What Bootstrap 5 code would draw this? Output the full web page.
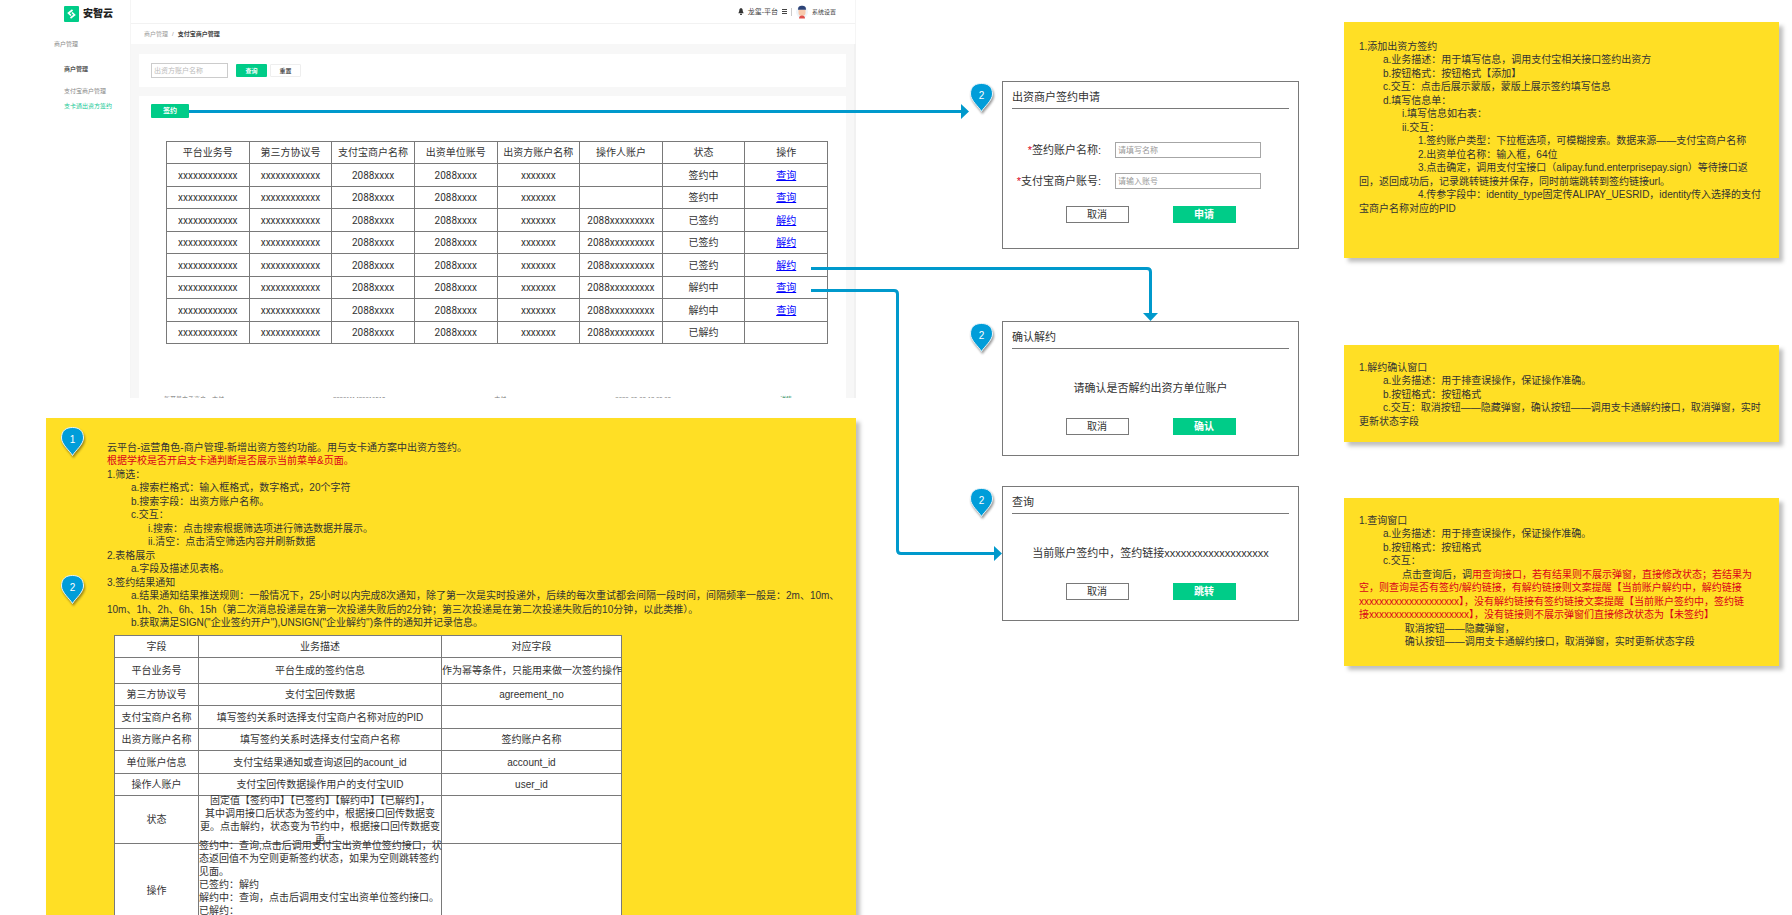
<!DOCTYPE html>
<html lang="zh-CN">
<head>
<meta charset="utf-8">
<meta name="viewport" content="width=device-width, initial-scale=1">
<title>安智云 - 支卡通出资方签约</title>
<link href="https://cdn.jsdelivr.net/npm/bootstrap@5.3.0/dist/css/bootstrap.min.css" rel="stylesheet">
<style>
  :root { --green: #00cc88; --ink: #333333; --line: #797979; --flow: #0099cc; --pin: #009dd9; --red: #d9001b; }
  body { font-family: "Liberation Sans", "Noto Sans CJK SC", sans-serif; font-size: 10px; line-height: 13px; color: var(--ink); background: #fff; }
  .board { display: grid; height: 100vh; overflow: hidden; align-items: start;
    grid-template-columns: minmax(0,46fr) minmax(0,810fr) minmax(0,146fr) minmax(0,297fr) minmax(0,45fr) minmax(0,435fr) minmax(0,13fr); }
  .lane-app { grid-column: 2; } .lane-dialogs { grid-column: 4; } .lane-notes { grid-column: 6; }
  .flows { position: absolute; top: 0; left: 0; width: 100%; height: 915px; pointer-events: none; z-index: 2; }

  /* application window */
  .window { height: 398px; overflow: hidden; font-size: 6px; line-height: 8px; }
  .side { width: 84px; flex: none; color: #888; }
  .side a { display: block; color: inherit; text-decoration: none; white-space: nowrap; }
  .side .brand { display: flex; align-items: center; gap: 4px; padding: 6px 0 0 18px; }
  .brand-name { font-size: 10px; line-height: 16px; font-weight: 900; color: #222; }
  .side .group { margin: 18px 0 0 8px; }
  .side ul { margin: 17px 0 0 18px; display: grid; }
  .side li + li { margin-top: 14px; } .side li + li + li { margin-top: 7px; }
  .side .section-link { color: #555; font-weight: 700; } .side .current { color: #20c997; }
  .main { border-left: 1px solid #f5f5f5; min-width: 0; }
  .topline { height: 24px; border-bottom: 1px solid #f2f2f2; border-right: 1px solid #f5f5f5; padding-right: 19px; color: #444; }
  .org-name { font-size: 7px; }
  .divider { height: 8px; border-left: 1px solid #ccc; }
  .crumbs { height: 20px; padding-left: 13px; border-right: 1px solid #f5f5f5; color: #999; }
  .crumbs a { color: inherit; text-decoration: none; }
  .crumbs b { color: #444; }
  .stage { background: #f7f7f7; height: 354px; padding-top: 10px; padding-left: 8px; }
  .stage-body { min-width: 0; }
  .scroll-track { width: 7px; margin-top: -10px; background: #f1f1f1; padding: 8px 1px 0; position: relative; }
  .scroll-thumb { height: 245px; background: #c1c1c1; }
  .scroll-track svg { position: absolute; left: 2px; width: 3px; height: 2px; }
  .scroll-track .up { top: 4px; } .scroll-track .down { bottom: 3px; }
  .panel { background: #fff; margin-right: 8px; }
  .filter { height: 33px; padding-left: 12px; }
  .filter input { width: 77px; height: 15px; border: 1px solid #ccc; font-size: 7px; padding: 0 2px; }
  .filter input::placeholder { color: #bbb; }
  .btn-mini { border: 0; border-radius: 1px; height: 13px; width: 31px; font-size: 6px; line-height: 8px; padding: 0; }
  .btn-green { background: var(--green); color: #fff; font-weight: 700; }
  .btn-reset { background: #fff; border: 1px solid #eee; color: #555; font-weight: 700; margin-left: 3px; }
  .btn-sign { width: 38px; height: 14px; font-size: 7px; }
  .result { margin-top: 9px; padding: 8px 18px 0 12px; height: 302px; overflow: hidden; }
  .grid-table { table-layout: fixed; border-collapse: collapse; text-align: center; background: #fff; color: var(--ink); }
  .grid-table th, .grid-table td { border: 1px solid var(--line); padding: 0; font-weight: 400; vertical-align: middle; white-space: nowrap; }
  .orders { margin: 23px 0 0 15px; width: calc(100% - 15px); font: 10px/13px Roboto, "Noto Sans CJK SC", sans-serif; }
  .orders tr { height: 22px; } .orders tbody tr:nth-child(odd) { height: 23px; }
  .orders a { color: #00f; text-decoration: underline; }
  .cut-row { padding: 51px 36px 0 13px; color: #777; }

  /* yellow notes */
  .memo { position: relative; background: #ffdf25; box-shadow: 4px 4px 4px rgba(0,0,0,.25); padding: 16px 15px 0; }
  .memo p { margin: 0; line-height: 13px; white-space: nowrap; }
  .memo p:nth-of-type(even) { line-height: 14px; }
  .in1 { padding-left: 24px; } .in2 { padding-left: 43px; } .in3 { padding-left: 59px; }
  .red { color: var(--red); }
  .memo-main { margin-top: 20px; padding: 23px 15px 40px 61px; }
  .memo-main .in2 { padding-left: 41px; }
  .memo-add { margin-top: 22px; min-height: 236px; padding-top: 18px; }
  .memo-cancel { margin-top: 87px; min-height: 97px; }
  .memo-query { margin-top: 56px; min-height: 168px; }
  .fields { margin: 5px 0 0 7px; width: 508px; }
  .fields .c1 { width: 84px; } .fields .c2 { width: 243px; }
  .fields tr { height: 22px; } .fields .t23 { height: 23px; } .fields .t26 { height: 26px; }
  .cellbox { height: 47px; display: flex; align-items: center; justify-content: center; }
  .cellbox.tall { height: 93px; justify-content: flex-start; text-align: left; }
  .tall div { min-height: 104px; }

  /* dialogs */
  .dialog { position: relative; border: 1px solid var(--line); padding: 8px 9px 0; height: 135px; background: #fff; font-size: 11px; line-height: 14px; }
  .dialog h2 { font-size: 11px; line-height: 14px; font-weight: 400; margin: 0; padding-bottom: 4px; border-bottom: 1px solid var(--line); }
  .dialog-apply { margin-top: 81px; height: 168px; }
  .dialog-cancel { margin-top: 72px; } .dialog-query { margin-top: 30px; }
  .dialog .msg { margin: 32px 0 23px; text-align: center; white-space: nowrap; }
  .dialog label { width: 89px; text-align: right; white-space: nowrap; }
  .dialog input { width: 146px; height: 16px; margin-left: 14px; border: 1px solid #a6a6a6; font-size: 8px; line-height: 12px; padding: 0 2px; }
  .dialog input::placeholder { color: #999; }
  .fieldset-rows { margin: 33px 0 17px; display: grid; gap: 15px; }
  .actions { display: flex; justify-content: center; gap: 44px; }
  .actions button { width: 63px; height: 17px; font-size: 10px; line-height: 13px; padding: 0; border: 1px solid var(--line); background: #fff; color: var(--ink); }
  .actions .btn-green { background: var(--green); border-color: var(--green); color: #fff; }

  /* numbered pins */
  .pin { position: absolute; left: -34px; top: 0; width: 25px; height: 31px; font-size: 10px; line-height: 28px; text-align: center; color: #fff; }
  .pin svg { position: absolute; inset: 0; filter: drop-shadow(1px 2px 1px rgba(0,0,0,.4)); }
  .pin span { position: relative; }
  .memo .pin { left: 14px; top: 8px; } .memo .pin-second { top: 156px; }
</style>
</head>
<body>
<svg width="0" height="0" class="position-absolute" aria-hidden="true">
  <symbol id="pin" viewBox="0 0 25 31"><path d="M12.500 29.500C10 25 1.500 18.500 1.500 12C1.500 4.500 6 1.500 12.500 1.500S23.500 4.500 23.500 12C23.500 18.500 15 25 12.500 29.500Z" fill="#009dd9" stroke="#e9f5fa"/></symbol>
</svg>
<main class="board position-relative">

  <section class="lane-app">
    <div class="window d-flex">
      <nav class="side">
        <a href="#" class="brand">
          <svg width="15" height="16" viewBox="0 0 15 16"><rect width="15" height="16" rx="1" fill="#00cc88"/><path d="M8.500 4 4.500 7 7 9.500M6.500 12l4-3L8 6.500" fill="none" stroke="#fff" stroke-width="1.700"/></svg>
          <span class="brand-name">安智云</span>
        </a>
        <div class="group">商户管理</div>
        <ul class="list-unstyled">
          <li><a href="#" class="section-link">商户管理</a></li>
          <li><a href="#">支付宝商户管理</a></li>
          <li><a href="#" class="current">支卡通出资方签约</a></li>
        </ul>
      </nav>
      <div class="main flex-grow-1">
        <header class="topline d-flex align-items-center justify-content-end">
          <svg width="6" height="7" viewBox="0 0 6 8"><path d="M3 0C1.400.5 1 1.700 1 3.500L0 6h6L5 3.500C5 1.700 4.600.5 3 0ZM2 6.500h2V8H2Z" fill="#333"/></svg>
          <span class="ms-1 org-name">龙玺-平台</span>
          <svg class="mx-1" width="5" height="5" viewBox="0 0 5 5"><path d="M0 .5h5M0 2.500h5M0 4.500h5" stroke="#444"/></svg>
          <span class="divider"></span>
          <svg class="ms-1" width="12" height="14" viewBox="0 0 12 14"><circle cx="6" cy="7" r="6" fill="#eef5fb"/><path d="M2.500 4.500h7V8a3.500 3 0 0 1-7 0Z" fill="#f8c9ac"/><path d="M2 4.800C2 1.500 3.500.8 6 .8s4 .7 4 4Z" fill="#2c4378"/><path d="M3 13.500c0-2 1-3 3-3s3 1 3 3Z" fill="#e0504c"/></svg>
          <span class="ms-1">系统设置</span>
        </header>
        <nav class="crumbs d-flex align-items-center gap-1"><a href="#">商户管理</a><span>/</span><b>支付宝商户管理</b></nav>
        <div class="stage d-flex">
          <div class="stage-body flex-grow-1">
            <form class="panel filter d-flex align-items-center">
              <input type="text" aria-label="出资方账户名称" placeholder="出资方账户名称">
              <button type="button" class="btn-mini btn-green ms-2">查询</button>
              <button type="button" class="btn-mini btn-reset">重置</button>
            </form>
            <div class="panel result">
              <button type="button" class="btn-mini btn-green btn-sign d-block">签约</button>
              <table class="grid-table orders">
                <thead><tr><th>平台业务号</th><th>第三方协议号</th><th>支付宝商户名称</th><th>出资单位账号</th><th>出资方账户名称</th><th>操作人账户</th><th>状态</th><th>操作</th></tr></thead>
                <tbody>
                  <tr><td>xxxxxxxxxxxx</td><td>xxxxxxxxxxxx</td><td>2088xxxx</td><td>2088xxxx</td><td>xxxxxxx</td><td></td><td>签约中</td><td><a href="#">查询</a></td></tr>
                  <tr><td>xxxxxxxxxxxx</td><td>xxxxxxxxxxxx</td><td>2088xxxx</td><td>2088xxxx</td><td>xxxxxxx</td><td></td><td>签约中</td><td><a href="#">查询</a></td></tr>
                  <tr><td>xxxxxxxxxxxx</td><td>xxxxxxxxxxxx</td><td>2088xxxx</td><td>2088xxxx</td><td>xxxxxxx</td><td>2088xxxxxxxxx</td><td>已签约</td><td><a href="#">解约</a></td></tr>
                  <tr><td>xxxxxxxxxxxx</td><td>xxxxxxxxxxxx</td><td>2088xxxx</td><td>2088xxxx</td><td>xxxxxxx</td><td>2088xxxxxxxxx</td><td>已签约</td><td><a href="#">解约</a></td></tr>
                  <tr><td>xxxxxxxxxxxx</td><td>xxxxxxxxxxxx</td><td>2088xxxx</td><td>2088xxxx</td><td>xxxxxxx</td><td>2088xxxxxxxxx</td><td>已签约</td><td><a href="#">解约</a></td></tr>
                  <tr><td>xxxxxxxxxxxx</td><td>xxxxxxxxxxxx</td><td>2088xxxx</td><td>2088xxxx</td><td>xxxxxxx</td><td>2088xxxxxxxxx</td><td>解约中</td><td><a href="#">查询</a></td></tr>
                  <tr><td>xxxxxxxxxxxx</td><td>xxxxxxxxxxxx</td><td>2088xxxx</td><td>2088xxxx</td><td>xxxxxxx</td><td>2088xxxxxxxxx</td><td>解约中</td><td><a href="#">查询</a></td></tr>
                  <tr><td>xxxxxxxxxxxx</td><td>xxxxxxxxxxxx</td><td>2088xxxx</td><td>2088xxxx</td><td>xxxxxxx</td><td>2088xxxxxxxxx</td><td>已解约</td><td></td></tr>
                </tbody>
              </table>
              <div class="cut-row d-flex justify-content-between"><span>新开普电子商户、支付</span><span>2020111420016513</span><span>支付</span><span>2020-09-09 18:09:09</span><span class="text-success">详情</span></div>
            </div>
          </div>
          <div class="scroll-track">
            <svg class="up" viewBox="0 0 3 2"><path d="M0 2 1.500 0 3 2Z" fill="#888"/></svg>
            <div class="scroll-thumb"></div>
            <svg class="down" viewBox="0 0 3 2"><path d="M0 0h3L1.500 2Z" fill="#666"/></svg>
          </div>
        </div>
      </div>
    </div>

    <article class="memo memo-main">
      <div class="pin"><svg width="25" height="31"><use href="#pin"/></svg><span>1</span></div>
      <div class="pin pin-second"><svg width="25" height="31"><use href="#pin"/></svg><span>2</span></div>
      <p>云平台-运营角色-商户管理-新增出资方签约功能。用与支卡通方案中出资方签约。</p>
      <p class="red">根据学校是否开启支卡通判断是否展示当前菜单&amp;页面。</p>
      <p>1.筛选：</p>
      <p class="in1">a.搜索栏格式：输入框格式，数字格式，20个字符</p>
      <p class="in1">b.搜索字段：出资方账户名称。</p>
      <p class="in1">c.交互：</p>
      <p class="in2">i.搜索：点击搜索根据筛选项进行筛选数据并展示。</p>
      <p class="in2">ii.清空：点击清空筛选内容并刷新数据</p>
      <p>2.表格展示</p>
      <p class="in1">a.字段及描述见表格。</p>
      <p>3.签约结果通知</p>
      <p class="in1">a.结果通知结果推送规则：一般情况下，25小时以内完成8次通知，除了第一次是实时投递外，后续的每次重试都会间隔一段时间，间隔频率一般是：2m、10m、</p>
      <p>10m、1h、2h、6h、15h（第二次消息投递是在第一次投递失败后的2分钟；第三次投递是在第二次投递失败后的10分钟，以此类推）。</p>
      <p class="in1">b.获取满足SIGN("企业签约开户"),UNSIGN("企业解约")条件的通知并记录信息。</p>
      <table class="grid-table fields">
        <colgroup><col class="c1"><col class="c2"><col></colgroup>
        <thead><tr><th>字段</th><th>业务描述</th><th>对应字段</th></tr></thead>
        <tbody>
          <tr class="t26"><td>平台业务号</td><td>平台生成的签约信息</td><td>作为幂等条件，只能用来做一次签约操作</td></tr>
          <tr><td>第三方协议号</td><td>支付宝回传数据</td><td>agreement_no</td></tr>
          <tr class="t23"><td>支付宝商户名称</td><td>填写签约关系时选择支付宝商户名称对应的PID</td><td></td></tr>
          <tr><td>出资方账户名称</td><td>填写签约关系时选择支付宝商户名称</td><td>签约账户名称</td></tr>
          <tr class="t23"><td>单位账户信息</td><td>支付宝结果通知或查询返回的acount_id</td><td>account_id</td></tr>
          <tr><td>操作人账户</td><td>支付宝回传数据操作用户的支付宝UID</td><td>user_id</td></tr>
          <tr><td>状态</td><td><div class="cellbox"><div>固定值【签约中】【已签约】【解约中】【已解约】，<br>其中调用接口后状态为签约中，根据接口回传数据变<br>更。点击解约，状态变为节约中，根据接口回传数据变<br>更</div></div></td><td></td></tr>
          <tr><td>操作</td><td><div class="cellbox tall"><div>签约中：查询,点击后调用支付宝出资单位签约接口，状<br>态返回值不为空则更新签约状态，如果为空则跳转签约<br>见面。<br>已签约：解约<br>解约中：查询，点击后调用支付宝出资单位签约接口。<br>已解约：</div></div></td><td></td></tr>
        </tbody>
      </table>
    </article>
  </section>

  <section class="lane-dialogs">
    <form class="dialog dialog-apply">
      <div class="pin"><svg width="25" height="31"><use href="#pin"/></svg><span>2</span></div>
      <h2>出资商户签约申请</h2>
      <div class="fieldset-rows">
        <div class="d-flex align-items-center"><label for="acct-name"><span class="red">*</span>签约账户名称:</label><input id="acct-name" type="text" placeholder="请填写名称"></div>
        <div class="d-flex align-items-center"><label for="acct-no"><span class="red">*</span>支付宝商户账号:</label><input id="acct-no" type="text" placeholder="请输入账号"></div>
      </div>
      <div class="actions"><button type="button">取消</button><button type="button" class="btn-green">申请</button></div>
    </form>
    <div class="dialog dialog-cancel">
      <div class="pin"><svg width="25" height="31"><use href="#pin"/></svg><span>2</span></div>
      <h2>确认解约</h2>
      <div class="msg">请确认是否解约出资方单位账户</div>
      <div class="actions"><button type="button">取消</button><button type="button" class="btn-green">确认</button></div>
    </div>
    <div class="dialog dialog-query">
      <div class="pin"><svg width="25" height="31"><use href="#pin"/></svg><span>2</span></div>
      <h2>查询</h2>
      <div class="msg">当前账户签约中，签约链接xxxxxxxxxxxxxxxxxxx</div>
      <div class="actions"><button type="button">取消</button><button type="button" class="btn-green">跳转</button></div>
    </div>
  </section>

  <section class="lane-notes">
    <article class="memo memo-add">
      <p>1.添加出资方签约</p>
      <p class="in1">a.业务描述：用于填写信息，调用支付宝相关接口签约出资方</p>
      <p class="in1">b.按钮格式：按钮格式【添加】</p>
      <p class="in1">c.交互：点击后展示蒙版，蒙版上展示签约填写信息</p>
      <p class="in1">d.填写信息单：</p>
      <p class="in2">i.填写信息如右表：</p>
      <p class="in2">ii.交互：</p>
      <p class="in3">1.签约账户类型：下拉框选项，可模糊搜索。数据来源——支付宝商户名称</p>
      <p class="in3">2.出资单位名称：输入框，64位</p>
      <p class="in3">3.点击确定，调用支付宝接口（alipay.fund.enterprisepay.sign）等待接口返</p>
      <p>回，返回成功后，记录跳转链接并保存，同时前端跳转到签约链接url。</p>
      <p class="in3">4.传参字段中：identity_type固定传ALIPAY_UESRID，identity传入选择的支付</p>
      <p>宝商户名称对应的PID</p>
    </article>
    <article class="memo memo-cancel">
      <p>1.解约确认窗口</p>
      <p class="in1">a.业务描述：用于排查误操作，保证操作准确。</p>
      <p class="in1">b.按钮格式：按钮格式</p>
      <p class="in1">c.交互：取消按钮——隐藏弹窗，确认按钮——调用支卡通解约接口，取消弹窗，实时</p>
      <p>更新状态字段</p>
    </article>
    <article class="memo memo-query">
      <p>1.查询窗口</p>
      <p class="in1">a.业务描述：用于排查误操作，保证操作准确。</p>
      <p class="in1">b.按钮格式：按钮格式</p>
      <p class="in1">c.交互：</p>
      <p class="in2">点击查询后，调<span class="red">用查询接口，若有结果则不展示弹窗，直接修改状态；若结果为</span></p>
      <p class="red">空，则查询是否有签约/解约链接，有解约链接则文案提醒【当前账户解约中，解约链接</p>
      <p class="red">xxxxxxxxxxxxxxxxxxxx】，没有解约链接有签约链接文案提醒【当前账户签约中，签约链</p>
      <p class="red">接xxxxxxxxxxxxxxxxxxxx】，没有链接则不展示弹窗们直接修改状态为【未签约】</p>
      <p class="in2">&nbsp;取消按钮——隐藏弹窗，</p>
      <p class="in2">&nbsp;确认按钮——调用支卡通解约接口，取消弹窗，实时更新状态字段</p>
    </article>
  </section>

  <svg class="flows" viewBox="0 0 1792 915" preserveAspectRatio="none" aria-hidden="true">
    <g fill="none" stroke="#0099cc" stroke-width="3">
      <path d="M189 111.500H963"/>
      <path d="M811 268.500H1147Q1150.500 268.500 1150.500 272V315"/>
      <path d="M811 290.500H894Q897.500 290.500 897.500 294V550Q897.500 553.500 901 553.500H996"/>
    </g>
    <path d="M961 104l8 7.500-8 7.500ZM1143 313h15l-7.500 8ZM994 546l8 7.500-8 7.500Z" fill="#0099cc"/>
  </svg>
</main>
<script src="https://cdn.jsdelivr.net/npm/bootstrap@5.3.0/dist/js/bootstrap.bundle.min.js"></script>
</body>
</html>
